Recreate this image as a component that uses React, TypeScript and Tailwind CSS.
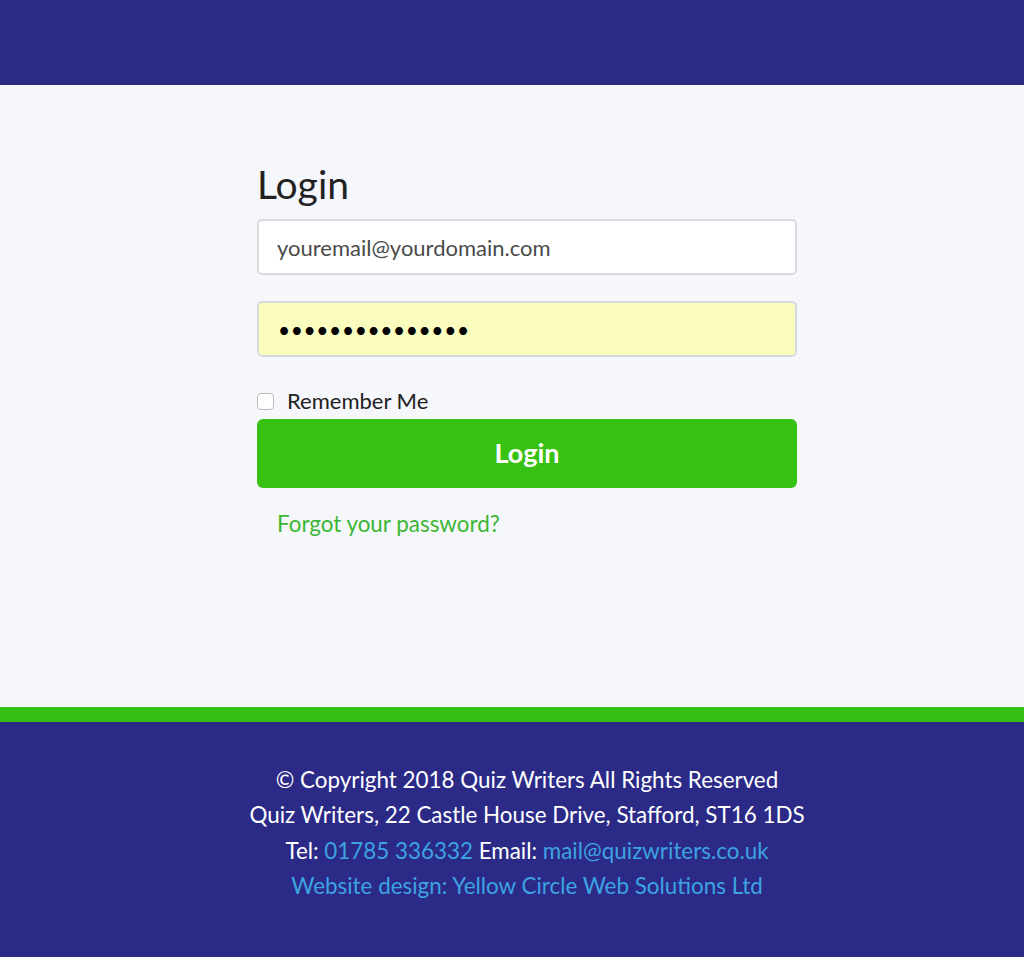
import { useState } from "react";

const App = () => {
  const [email, setEmail] = useState("youremail@yourdomain.com");
  const [password, setPassword] = useState("passwordpasswor");
  const [remember, setRemember] = useState(false);

  return (
    <div className="min-h-[957px] flex flex-col font-['Lato','Open_Sans',sans-serif]">
      {/* Top bar */}
      <header className="h-[85px] bg-[#2b2a87]" />

      {/* Login form */}
      <main className="h-[622px] bg-[#f6f7fb] pl-[30px]">
        <div className="w-[540px] mx-auto pt-[76px]">
          <h1 className="text-[39px] leading-[46px] text-[#222] mb-[12px]">Login</h1>
          <form className="flex flex-col" onSubmit={(e) => e.preventDefault()}>
            <input
              type="email"
              value={email}
              onChange={(e) => setEmail(e.target.value)}
              className="h-[56px] w-full rounded-[5px] border-2 border-[#d8dae0] bg-white px-[18px] text-[22px] text-[#4a4a4a] outline-none"
            />
            <input
              type="password"
              value={password}
              onChange={(e) => setPassword(e.target.value)}
              className="mt-[26px] h-[56px] w-full rounded-[5px] border-2 border-[#d8dae0] bg-[#fafdbe] px-[19px] text-[21px] tracking-[0.6px] text-black outline-none"
            />
            <label className="mt-[29px] flex items-center gap-[13px] text-[22px] text-[#222] leading-[30px]">
              <input
                type="checkbox"
                checked={remember}
                onChange={(e) => setRemember(e.target.checked)}
                className="h-[17px] w-[17px] appearance-none rounded-[4px] border border-[#bbb] bg-white"
              />
              Remember Me
            </label>
            <button
              type="submit"
              className="mt-[3px] h-[69px] w-full rounded-[6px] bg-[#36c113] text-[27px] font-bold text-white"
            >
              Login
            </button>
            <a href="#" className="mt-[20px] ml-[20px] text-[22.4px] text-[#3bb634] leading-[32px]">
              Forgot your password?
            </a>
          </form>
        </div>
      </main>

      {/* Stripe */}
      <div className="h-[15px] bg-[#36bf14]" />

      {/* Footer */}
      <footer className="flex-1 bg-[#2b2a87] pl-[30px] pt-[40px] text-center text-[22.4px] leading-[35.4px] text-white">
        <p>© Copyright 2018 Quiz Writers All Rights Reserved</p>
        <p>Quiz Writers, 22 Castle House Drive, Stafford, ST16 1DS</p>
        <p>
          Tel: <a href="#" className="text-[#3da3e2]">01785 336332</a> Email:{" "}
          <a href="#" className="text-[#3da3e2]">mail@quizwriters.co.uk</a>
        </p>
        <p>
          <a href="#" className="text-[#3da3e2]">Website design: Yellow Circle Web Solutions Ltd</a>
        </p>
      </footer>
    </div>
  );
};

export default App;
